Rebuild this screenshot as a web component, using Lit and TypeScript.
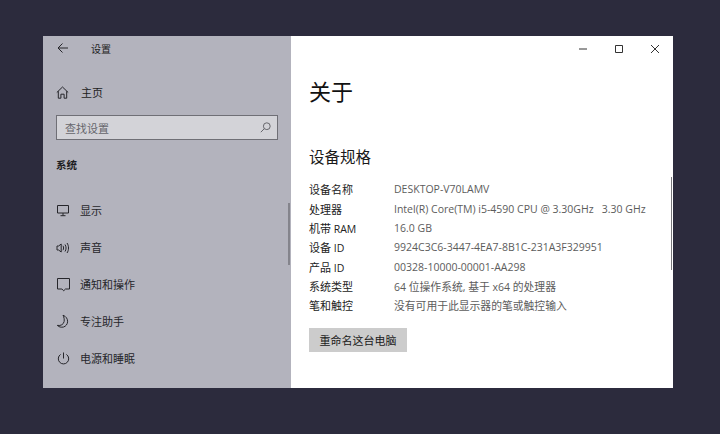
import { LitElement, html, css, svg } from "lit";
import { customElement } from "lit/decorators.js";

const ICONS: Record<string, unknown> = {
  display: svg`<path d="M1.5 2.5h11v7.5h-11zM7 10v2.5M4.5 12.7h5"/>`,
  sound: svg`<path d="M1 6v4h1.6l2.6 2V4L2.6 6zM7 5.8c.8 1.3.8 3.1 0 4.4M9 4.5c1.4 2 1.4 5 0 7M11 3c2 2.8 2 7.2 0 10"/>`,
  notify: svg`<path d="M1.5 1.5h12v10.5h-4l-1.8 1.8-1.8-1.8H1.5z"/>`,
  moon: svg`<path d="M7 1.2c3 1.2 4.8 3.6 4.6 6.6-.2 2.6-1.8 4.4-4 5.2-2.4.6-4.8 0-6.3-1.6 3.6.6 6.2-1 6.8-3.8.4-2.2-.1-4.4-1.1-6.4z"/>`,
  power: svg`<path d="M7.5 1.5v6M4.6 3.4a5.2 5.2 0 1 0 5.8 0"/>`,
};

const NAV = [
  ["display", "显示"],
  ["sound", "声音"],
  ["notify", "通知和操作"],
  ["moon", "专注助手"],
  ["power", "电源和睡眠"],
];

const SPECS = [
  ["设备名称", "DESKTOP-V70LAMV"],
  ["处理器", "Intel(R) Core(TM) i5-4590 CPU @ 3.30GHz   3.30 GHz"],
  ["机带 RAM", "16.0 GB"],
  ["设备 ID", "9924C3C6-3447-4EA7-8B1C-231A3F329951"],
  ["产品 ID", "00328-10000-00001-AA298"],
  ["系统类型", "64 位操作系统, 基于 x64 的处理器"],
  ["笔和触控", "没有可用于此显示器的笔或触控输入"],
];

/* Chinese runs sit slightly larger than the Latin text beside them. */
const mixed = (text: string) =>
  text
    .split(/([\u4e00-\u9fff]+)/)
    .map((part, i) => (i % 2 ? html`<span class="cjk">${part}</span>` : part));

@customElement("app-root")
export class AppRoot extends LitElement {
  static styles = css`
    :host {
      display: block;
      width: 720px;
      height: 434px;
      background: #2c2b3d;
      font-family: "Open Sans", "Noto Sans CJK SC", sans-serif;
      font-size: 11px;
      color: #222;
    }
    .stage {
      box-sizing: border-box;
      width: 720px;
      height: 434px;
      padding: 36px 47px 46px 43px;
      display: flex;
    }
    .window {
      flex: 1;
      display: flex;
      position: relative;
      background: #fff;
      overflow: hidden;
    }
    .side {
      width: 248px;
      flex: none;
      background: #b3b3bd;
      position: relative;
      box-sizing: border-box;
      padding: 0 13px;
    }
    .titlebar {
      height: 24px;
      display: flex;
      align-items: center;
      gap: 22px;
      color: #1d1d22;
      font-size: 10px;
      padding-left: 1px;
    }
    .home {
      display: flex;
      align-items: center;
      gap: 12px;
      height: 20px;
      margin-top: 22px;
      font-size: 11px;
      color: #1d1d22;
    }
    .search {
      box-sizing: border-box;
      height: 25px;
      width: 222px;
      margin-top: 13px;
      border: 1.5px solid #6f6f76;
      background: #d3d3d8;
      display: flex;
      align-items: center;
      justify-content: space-between;
      padding: 0 6px 0 8px;
      color: #66666c;
      font-size: 11px;
    }
    .section {
      margin-top: 17px;
      height: 16px;
      line-height: 16px;
      font-size: 10.5px;
      font-weight: 700;
      color: #1d1d22;
    }
    .nav {
      list-style: none;
      margin: 27px 0 0;
      padding: 0;
      display: flex;
      flex-direction: column;
      gap: 17px;
    }
    .nav li {
      display: flex;
      align-items: center;
      gap: 9px;
      height: 20px;
      color: #26262b;
      font-size: 11px;
    }
    .nav svg {
      width: 15px;
      height: 15px;
    }
    svg {
      flex: none;
      fill: none;
      stroke: #26262b;
      stroke-width: 1;
    }
    .search svg { stroke: #66666c; }
    .side-bar {
      position: absolute;
      left: 245px;
      top: 167px;
      width: 1.5px;
      height: 62px;
      background: #84848c;
    }
    .main {
      flex: 1;
      position: relative;
      box-sizing: border-box;
      padding: 0 18px;
    }
    .controls {
      height: 26px;
      display: flex;
      justify-content: flex-end;
      align-items: center;
      gap: 26px;
      margin-right: -5px;
    }
    .controls svg { width: 10px; height: 10px; stroke: #333; }
    h1 {
      margin: 14px 0 0;
      font-size: 22px;
      line-height: 30px;
      font-weight: 400;
      color: #111;
    }
    h2 {
      margin: 40px 0 0;
      font-size: 15.5px;
      line-height: 22px;
      font-weight: 400;
      color: #1a1a1a;
    }
    .specs {
      margin: 12.2px 0 0;
      display: grid;
      grid-template-columns: 85px 1fr;
      grid-auto-rows: 19.35px;
      line-height: 19.35px;
      font-size: 10.5px;
    }
    .cjk { font-size: 11px; }
    dd .cjk { font-size: 10.8px; }
    dt { color: #222; }
    dd { margin: 0; color: #5c5c5c; white-space: pre; }
    button {
      display: block;
      margin-top: 12.8px;
      width: 98px;
      height: 24px;
      border: 0;
      padding: 0;
      background: #cccccc;
      color: #1a1a1a;
      font: inherit;
      font-size: 11px;
    }
    .main-bar {
      position: absolute;
      right: 1px;
      top: 141px;
      width: 1.5px;
      height: 93px;
      background: #77777b;
    }
  `;

  render() {
    return html`<div class="stage">
      <div class="window">
        <aside class="side">
          <div class="titlebar">
            <svg width="12" height="12" viewBox="0 0 12 12"><path d="M1 6h10M5.5 1.5L1 6l4.5 4.5"/></svg>
            <span>设置</span>
          </div>
          <div class="home">
            <svg width="13" height="13" viewBox="0 0 13 13"><path d="M.8 6.5L6.5 1l5.7 5.5M2.3 5.2v7h2.6V8.2h3.2v4h2.6v-7"/></svg>
            <span>主页</span>
          </div>
          <div class="search">
            <span>查找设置</span>
            <svg width="11" height="11" viewBox="0 0 11 11"><circle cx="6.8" cy="4.2" r="3.4"/><path d="M4.4 6.6L.8 10.2"/></svg>
          </div>
          <div class="section">系统</div>
          <ul class="nav">
            ${NAV.map(
              ([icon, label]) => html`<li>
                <svg viewBox="0 0 15 15">${ICONS[icon]}</svg>
                <span>${label}</span>
              </li>`
            )}
          </ul>
          <div class="side-bar"></div>
        </aside>
        <main class="main">
          <div class="controls">
            <svg viewBox="0 0 10 10"><path d="M1 5h8"/></svg>
            <svg viewBox="0 0 10 10"><path d="M1.5 1.5h7v7h-7z"/></svg>
            <svg viewBox="0 0 10 10"><path d="M1 1l8 8M9 1l-8 8"/></svg>
          </div>
          <h1>关于</h1>
          <h2>设备规格</h2>
          <dl class="specs">
            ${SPECS.map(([k, v]) => html`<dt>${mixed(k)}</dt><dd>${mixed(v)}</dd>`)}
          </dl>
          <button>重命名这台电脑</button>
          <div class="main-bar"></div>
        </main>
      </div>
    </div>`;
  }
}
